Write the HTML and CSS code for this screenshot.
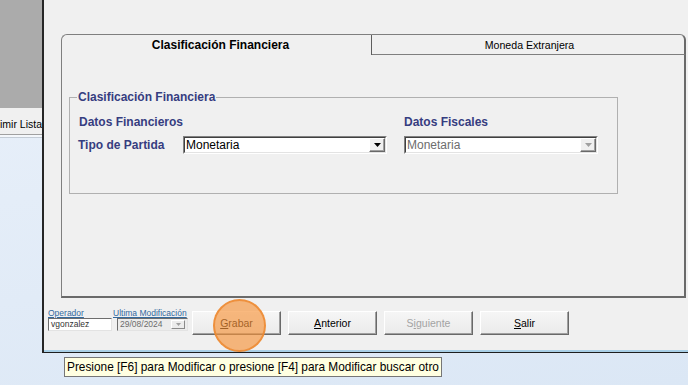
FILE: index.html
```html
<!DOCTYPE html>
<html lang="es">
  <head>
    <meta charset="UTF-8" />
    <title>Clasificación Financiera</title>
    <link rel="stylesheet" href="styles.css">
  </head>
  <body>
    <div class="desk">
      <div class="side">
        <div class="side-top"></div>
        <div class="side-strip"><span>imir Lista</span></div>
      </div>

      <div class="window">
        <div class="tabs">
          <div class="tab-row">
            <div class="tab active">Clasificación Financiera</div>
            <div class="tab other">Moneda Extranjera</div>
          </div>
          <div class="tab-panel">
            <fieldset class="group">
              <legend>Clasificación Financiera</legend>
              <div class="cols">
                <div class="col">
                  <div class="heading">Datos Financieros</div>
                  <div class="field">
                    <label>Tipo de Partida</label>
                    <div class="combo wide">
                      <div class="combo-in">
                        <span class="value">Monetaria</span>
                        <span class="drop"><svg width="7" height="4" viewBox="0 0 7 4"><path d="M0 0h7L3.5 4z" fill="#000"/></svg></span>
                      </div>
                    </div>
                  </div>
                </div>
                <div class="col">
                  <div class="heading">Datos Fiscales</div>
                  <div class="combo narrow disabled">
                    <div class="combo-in">
                      <span class="value">Monetaria</span>
                      <span class="drop"><svg width="7" height="4" viewBox="0 0 7 4"><path d="M0 0h7L3.5 4z" fill="#a0a0a0"/></svg></span>
                    </div>
                  </div>
                </div>
              </div>
            </fieldset>
          </div>
        </div>

        <div class="statusbar">
          <div class="meta">
            <span class="meta-label">Operador</span>
            <div class="meta-box user">vgonzalez</div>
          </div>
          <div class="meta date">
            <span class="meta-label">Ultima Modificación</span>
            <div class="meta-box stamp">
              <span>29/08/2024</span>
              <span class="mini-drop"><svg width="5" height="3" viewBox="0 0 5 3"><path d="M0 0h5L2.5 3z" fill="#a0a0a0"/></svg></span>
            </div>
          </div>
          <div class="buttons">
            <button class="btn"><u>G</u>rabar<span class="highlight"></span></button>
            <button class="btn"><u>A</u>nterior</button>
            <button class="btn" disabled>S<u>i</u>guiente</button>
            <button class="btn"><u>S</u>alir</button>
          </div>
        </div>
      </div>
    </div>

    <div class="tooltip">Presione [F6] para Modificar o presione [F4] para Modificar buscar otro</div>
  </body>
</html>
```

FILE: styles.css
```css
* {
  box-sizing: border-box;
}
body {
  margin: 0;
  width: 688px;
  height: 385px;
  overflow: hidden;
  background: linear-gradient(170deg, #eaf1fa 0%, #dbe7f5 100%);
  font-family: "Liberation Sans", Arial, sans-serif;
  font-size: 12px;
  color: #000;
}
.desk {
  display: flex;
  height: 353px;
}
.side {
  width: 42px;
  flex: none;
}
.side-top {
  height: 108px;
  background: #ababab;
}
.side-strip {
  height: 27px;
  padding-top: 5px;
  background: #f0f0f0;
  border-bottom: 1px solid #a0a0a0;
  box-shadow: 0 2px 0 #f4f7fb, 0 3px 0 #c4ccd6;
  display: flex;
  justify-content: flex-end;
  align-items: center;
  white-space: nowrap;
  font-size: 10.5px;
}
.window {
  flex: 1;
  background: #f0f0f0;
  border-left: 2px solid #262626;
  border-bottom: 1px solid #1e1e1e;
  box-shadow: inset 0 -2px 0 #a9cfe6;
  padding: 34px 2px 0 4px;
}
.tabs {
  margin-left: 13px;
}
.tab-row {
  display: flex;
  height: 21px;
}
.tab {
  height: 21px;
  line-height: 21px;
  text-align: center;
  border: 1px solid #7f7f7f;
  border-bottom: none;
}
.tab.active {
  width: 311px;
  padding-left: 8px;
  font-weight: bold;
  border-top-left-radius: 6px;
  border-right-color: #5e5e5e;
}
.tab.other {
  flex: 1;
  line-height: 20px;
  padding-left: 3px;
  font-size: 10.6px;
  border-left: none;
  border-right: 2px solid #6a6a6a;
  border-bottom: 1px solid #7f7f7f;
  border-top-right-radius: 6px;
}
.tab-panel {
  height: 243px;
  border-left: 1px solid #7f7f7f;
  border-right: 2px solid #6a6a6a;
  border-bottom: 2px solid #6a6a6a;
  padding-top: 35px;
}
.group {
  margin: 0 0 0 7px;
  width: 549px;
  padding: 0 7px 39px;
  border: 1px solid #b0b0b0;
  min-width: 0;
}
.group legend {
  padding: 0 1px;
  color: #363d80;
  font-weight: bold;
  line-height: 14px;
}
.cols {
  display: grid;
  grid-template-columns: 309px 194px;
  column-gap: 16px;
  margin: 10px 0 0 2px;
}
.heading {
  color: #363d80;
  font-weight: bold;
  line-height: 16px;
  margin-bottom: 6px;
}
.field {
  display: flex;
  align-items: center;
}
.field label {
  width: 105px;
  margin-left: -1px;
  color: #363d80;
  font-weight: bold;
}
.combo {
  height: 18px;
  border: 1px solid;
  border-color: #828282 #ffffff #ffffff #828282;
}
.combo.wide {
  width: 204px;
}
.combo.narrow {
  width: 194px;
}
.combo-in {
  height: 100%;
  display: flex;
  align-items: center;
  background: #fff;
  border: 1px solid;
  border-color: #404040 #e3e3e3 #e3e3e3 #404040;
}
.value {
  padding-left: 1px;
  line-height: 14px;
}
.disabled .value {
  color: #6d6d6d;
}
.drop {
  margin-left: auto;
  width: 16px;
  height: 14px;
  display: flex;
  align-items: center;
  justify-content: center;
  background: #f0f0f0;
  border: 1px solid;
  border-color: #ffffff #696969 #696969 #ffffff;
  box-shadow: inset -1px -1px 0 #a0a0a0;
}
.statusbar {
  display: flex;
  align-items: flex-start;
  margin-top: 11px;
}
.meta {
  display: flex;
  flex-direction: column;
}
.meta-label {
  font-size: 8.5px;
  line-height: 9px;
  color: #336a9f;
  text-decoration: underline;
  white-space: nowrap;
}
.meta-box {
  height: 13px;
  font-size: 8.5px;
  line-height: 11px;
  padding-left: 2px;
  border: 1px solid;
  border-color: #6d6d6d #e3e3e3 #e3e3e3 #6d6d6d;
}
.user {
  width: 64px;
  background: #fff;
  color: #333;
}
.date {
  margin-left: 1px;
}
.stamp {
  width: 71px;
  margin-left: 4px;
  display: flex;
  align-items: center;
  background: #ececec;
  color: #6d6d6d;
}
.mini-drop {
  margin-left: auto;
  width: 14px;
  height: 9px;
  margin-right: 2px;
  display: flex;
  align-items: center;
  justify-content: center;
  border: 1px solid;
  border-color: #ffffff #8a8a8a #8a8a8a #ffffff;
}
.buttons {
  display: flex;
  gap: 7px;
  margin: 2px 0 0 4px;
}
.btn {
  position: relative;
  width: 89px;
  height: 24px;
  padding: 0;
  font-family: "Liberation Sans", Arial, sans-serif;
  font-size: 10.5px;
  color: #000;
  background: linear-gradient(#f6f6f6, #ebebeb);
  border: 1px solid;
  border-color: #ffffff #696969 #696969 #ffffff;
  box-shadow: inset -1px -1px 0 #a0a0a0;
}
.btn:disabled {
  color: #a3a3a3;
}
.highlight {
  position: absolute;
  left: 20px;
  top: -13px;
  width: 53px;
  height: 53px;
  border-radius: 50%;
  background: rgba(246, 148, 58, 0.65);
  border: 2px solid rgba(236, 138, 50, 0.85);
  pointer-events: none;
}
.tooltip {
  display: inline-block;
  margin: 4px 0 0 64px;
  height: 20px;
  padding: 0 2px;
  line-height: 18px;
  background: #ffffe1;
  border: 1px solid #767676;
  font-size: 11.85px;
  white-space: nowrap;
}
```
